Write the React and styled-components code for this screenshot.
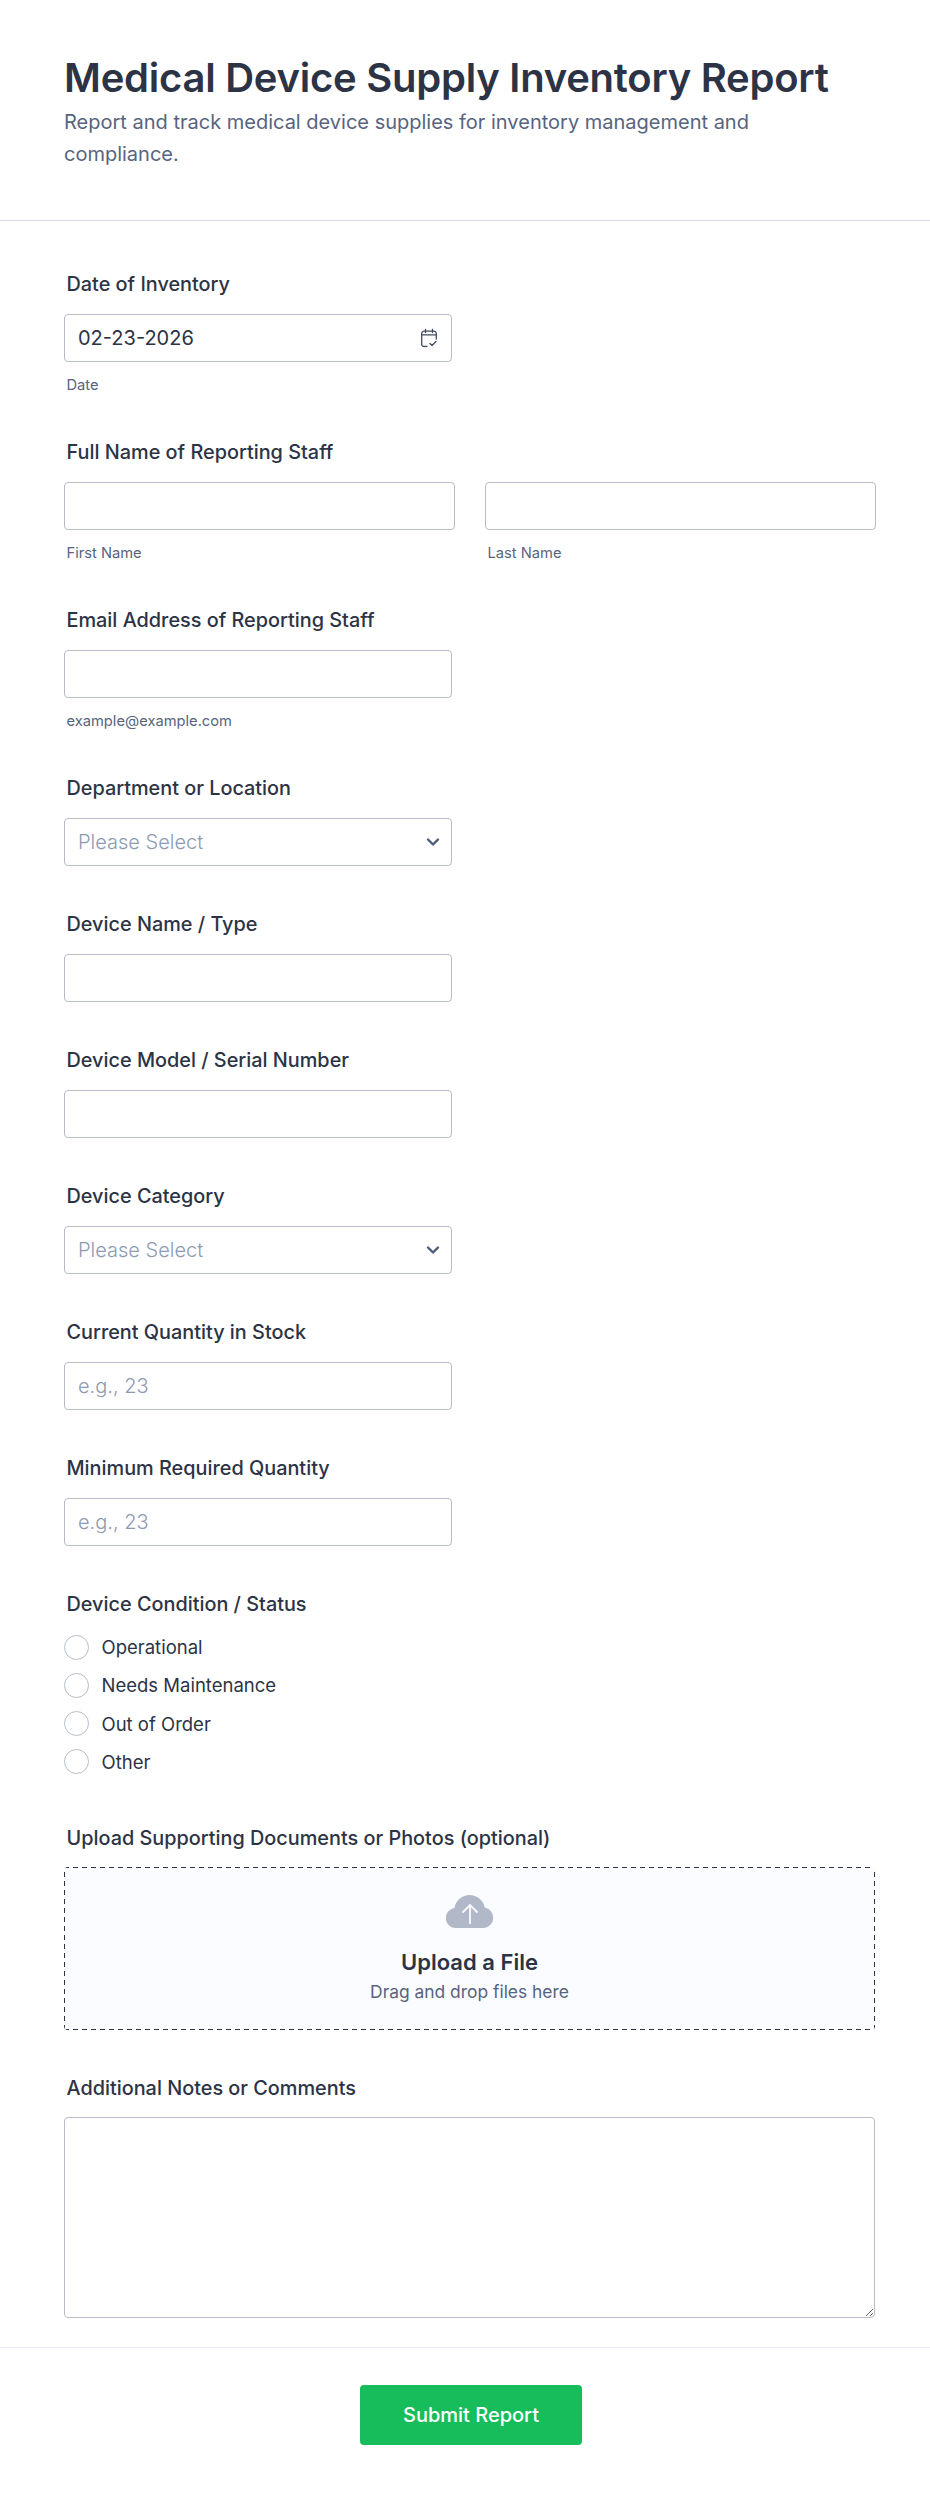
import styled, { createGlobalStyle } from 'styled-components';

const GlobalStyle = createGlobalStyle`
    * {
        box-sizing: border-box;
    }
    html, body {
        margin: 0;
        padding: 0;
        background-color: #fff;
        font-family: Inter, "Liberation Sans", sans-serif;
    }
`;

const Page = styled.div`
    width: 930px;
    height: 2494px;
    display: flex;
    flex-direction: column;
    overflow: hidden;
`;

const Header = styled.header`
    flex-shrink: 0;
    height: 221px;
    padding: 50px 64px 0;
    border-bottom: 1px solid #d8dbe6;
`;

const Title = styled.h1`
    margin: 0;
    font-size: 40px;
    line-height: 56px;
    font-weight: 600;
    letter-spacing: -0.25px;
    color: #2c3345;
`;

const Description = styled.p`
    margin: 0;
    width: 740px;
    font-size: 20px;
    line-height: 32px;
    color: #57647e;
`;

const Form = styled.form`
    flex: 1;
    min-height: 0;
    display: flex;
    flex-direction: column;
    padding: 49px 54px 0 64px;
`;

const Field = styled.div`
    display: flex;
    flex-direction: column;
    margin-bottom: 44px;
    &:last-child {
        margin-bottom: 0;
    }
`;

const Label = styled.label`
    margin: 0 0 15.5px 2.5px;
    font-size: 19.85px;
    line-height: 28px;
    font-weight: 500;
    color: #2c3345;
`;

const Row = styled.div`
    display: flex;
    gap: 30px;
`;

const Column = styled.div`
    width: 391px;
    display: flex;
    flex-direction: column;
`;

const InputBox = styled.div`
    position: relative;
    width: 388px;
`;

const Input = styled.input`
    display: block;
    width: 100%;
    height: 48.5px;
    padding: 0 13px;
    border: 1px solid #b8bdc9;
    border-radius: 4px;
    background-color: #fff;
    font-family: inherit;
    font-size: 20px;
    color: #2c3345;
    outline: none;
    &::placeholder {
        color: #8d9bb0;
        font-weight: 300;
    }
`;

const Select = styled.select`
    display: block;
    width: 100%;
    height: 48.5px;
    padding: 0 13px;
    border: 1px solid #b8bdc9;
    border-radius: 4px;
    background-color: #fff;
    font-family: inherit;
    font-size: 20px;
    font-weight: 300;
    color: #8d9bb0;
    appearance: none;
    outline: none;
`;

const FieldIcon = styled.svg`
    position: absolute;
    top: 50%;
    right: ${(p) => p.$right}px;
    transform: translateY(-50%);
    pointer-events: none;
`;

const SubLabel = styled.span`
    margin: 14px 0 0 2.5px;
    font-size: 14.7px;
    line-height: 18px;
    color: #57647e;
`;

const RadioList = styled.div`
    display: flex;
    flex-direction: column;
    gap: 14.33px;
    margin-top: 1.5px;
    padding-bottom: 6px;
`;

const RadioRow = styled.label`
    display: flex;
    align-items: center;
    gap: 12.5px;
    height: 24px;
    font-size: 18.5px;
    color: #2c3345;
`;

const RadioCircle = styled.span`
    width: 25px;
    height: 25px;
    border: 1px solid #b8bdc9;
    border-radius: 50%;
    background-color: #fff;
`;

const UploadArea = styled.div`
    width: 811px;
    height: 162.5px;
    display: flex;
    flex-direction: column;
    align-items: center;
    padding-top: 28px;
    border-radius: 4px;
    background-color: #fbfcff;
    background-image:
        repeating-linear-gradient(90deg, #2c3345 0 5px, transparent 5px 9px),
        repeating-linear-gradient(90deg, #2c3345 0 5px, transparent 5px 9px),
        repeating-linear-gradient(0deg, #2c3345 0 5px, transparent 5px 9px),
        repeating-linear-gradient(0deg, #2c3345 0 5px, transparent 5px 9px);
    background-size: 100% 1px, 100% 1px, 1px 100%, 1px 100%;
    background-position: 0 0, 0 100%, 0 0, 100% 0;
    background-repeat: no-repeat;
`;

const UploadTitle = styled.div`
    margin-top: 19px;
    font-size: 22px;
    line-height: 30px;
    font-weight: 600;
    color: #2c3345;
`;

const UploadHint = styled.div`
    margin-top: 3px;
    font-size: 17.4px;
    line-height: 24px;
    color: #57647e;
`;

const TextArea = styled.textarea`
    display: block;
    width: 811px;
    height: 201px;
    border: 1px solid #b8bdc9;
    border-radius: 4px;
    background-color: #fff;
    outline: none;
`;

const Footer = styled.footer`
    flex-shrink: 0;
    height: 147px;
    display: flex;
    justify-content: center;
    padding: 37px 0 0 12px;
    border-top: 1px solid #eaebf2;
`;

const SubmitButton = styled.button`
    width: 222px;
    height: 60px;
    border: none;
    border-radius: 4px;
    background-color: #18bd5b;
    color: #fff;
    font-family: inherit;
    font-size: 20px;
    font-weight: 500;
`;

function CalendarIcon() {
    return (
        <FieldIcon $right={15} width="16" height="19" viewBox="0 0 16 19" fill="none" stroke="#434a60" strokeWidth="1.3" strokeLinecap="round" strokeLinejoin="round">
            <path d="M6 18H3a2.3 2.3 0 0 1-2.3-2.3V5a2.3 2.3 0 0 1 2.3-2.3h10a2.3 2.3 0 0 1 2.3 2.3v5.5" />
            <path d="M.7 6.4h14.6M4.5.7v3.4M11.5.7v3.4" />
            <path d="M9 15l2 2 4-4" />
        </FieldIcon>
    );
}

function ChevronIcon() {
    return (
        <FieldIcon $right={12} width="14" height="10" viewBox="0 0 14 10" fill="none" stroke="#4f5b7c" strokeWidth="2.4" strokeLinecap="round" strokeLinejoin="round">
            <path d="M2 2.5l5 5 5-5" />
        </FieldIcon>
    );
}

function CloudIcon() {
    return (
        <svg width="48" height="33" viewBox="0 0 48 33">
            <path fill="#b1b8c8" d="M10 33a10 10 0 0 1-1.6-19.9A15.5 15.5 0 0 1 23.5 0a15.5 15.5 0 0 1 15.2 12.6A10.3 10.3 0 0 1 38 33z" />
            <path fill="none" stroke="#fbfcff" strokeWidth="1.8" d="M24 29V10M16.5 17.5L24 10l7.5 7.5" />
        </svg>
    );
}

function TextField({ label, placeholder }) {
    return (
        <Field>
            <Label>{label}</Label>
            <InputBox>
                <Input type="text" placeholder={placeholder} />
            </InputBox>
        </Field>
    );
}

function SelectField({ label }) {
    return (
        <Field>
            <Label>{label}</Label>
            <InputBox>
                <Select defaultValue="">
                    <option value="">Please Select</option>
                </Select>
                <ChevronIcon />
            </InputBox>
        </Field>
    );
}

const conditions = ['Operational', 'Needs Maintenance', 'Out of Order', 'Other'];

export default function App() {
    return (
        <Page>
            <GlobalStyle />
            <Header>
                <Title>Medical Device Supply Inventory Report</Title>
                <Description>Report and track medical device supplies for inventory management and compliance.</Description>
            </Header>
            <Form>
                <Field>
                    <Label>Date of Inventory</Label>
                    <InputBox>
                        <Input type="text" defaultValue="02-23-2026" />
                        <CalendarIcon />
                    </InputBox>
                    <SubLabel>Date</SubLabel>
                </Field>
                <Field>
                    <Label>Full Name of Reporting Staff</Label>
                    <Row>
                        <Column>
                            <Input type="text" />
                            <SubLabel>First Name</SubLabel>
                        </Column>
                        <Column>
                            <Input type="text" />
                            <SubLabel>Last Name</SubLabel>
                        </Column>
                    </Row>
                </Field>
                <Field>
                    <Label>Email Address of Reporting Staff</Label>
                    <InputBox>
                        <Input type="text" />
                    </InputBox>
                    <SubLabel>example@example.com</SubLabel>
                </Field>
                <SelectField label="Department or Location" />
                <TextField label="Device Name / Type" />
                <TextField label="Device Model / Serial Number" />
                <SelectField label="Device Category" />
                <TextField label="Current Quantity in Stock" placeholder="e.g., 23" />
                <TextField label="Minimum Required Quantity" placeholder="e.g., 23" />
                <Field>
                    <Label>Device Condition / Status</Label>
                    <RadioList>
                        {conditions.map((item) => (
                            <RadioRow key={item}>
                                <RadioCircle />
                                {item}
                            </RadioRow>
                        ))}
                    </RadioList>
                </Field>
                <Field>
                    <Label>Upload Supporting Documents or Photos (optional)</Label>
                    <UploadArea>
                        <CloudIcon />
                        <UploadTitle>Upload a File</UploadTitle>
                        <UploadHint>Drag and drop files here</UploadHint>
                    </UploadArea>
                </Field>
                <Field>
                    <Label>Additional Notes or Comments</Label>
                    <TextArea />
                </Field>
            </Form>
            <Footer>
                <SubmitButton type="button">Submit Report</SubmitButton>
            </Footer>
        </Page>
    );
}
